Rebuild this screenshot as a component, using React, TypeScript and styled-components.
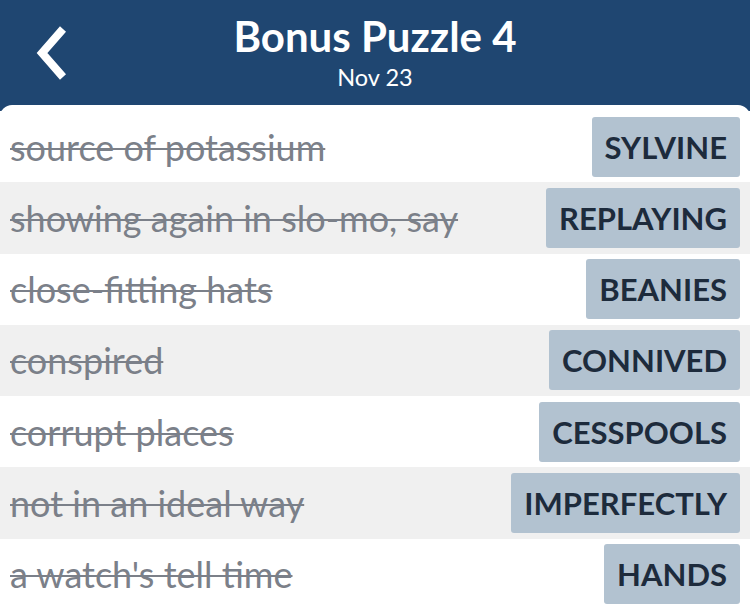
import styled, { createGlobalStyle } from 'styled-components';

const clues = [
  { clue: 'source of potassium', answer: 'SYLVINE' },
  { clue: 'showing again in slo-mo, say', answer: 'REPLAYING' },
  { clue: 'close-fitting hats', answer: 'BEANIES' },
  { clue: 'conspired', answer: 'CONNIVED' },
  { clue: 'corrupt places', answer: 'CESSPOOLS' },
  { clue: 'not in an ideal way', answer: 'IMPERFECTLY' },
  { clue: "a watch's tell time", answer: 'HANDS' },
];

const GlobalStyle = createGlobalStyle`
  body {
    margin: 0;
    background: #1f4671;
    font-family: Lato, 'Noto Sans', sans-serif;
    overflow: hidden;
  }
`;

const App = () => {
  return (
    <Page>
      <GlobalStyle />
      <Header>
        <BackButton aria-label="Back">
          <svg width="40" height="56" viewBox="0 0 40 56">
            <path d="M28 4 L7 28 L28 52" fill="none" stroke="#fff" strokeWidth="8" strokeLinejoin="miter" />
          </svg>
        </BackButton>
        <Title>Bonus Puzzle 4</Title>
        <Subtitle>Nov 23</Subtitle>
      </Header>

      <Card>
        {clues.map((c, i) => (
          <Row key={c.answer} $shaded={i % 2 === 1}>
            <Clue>{c.clue}</Clue>
            <Answer>{c.answer}</Answer>
          </Row>
        ))}
      </Card>
    </Page>
  );
};

export default App;

const Page = styled.div`
  width: 750px;
  height: 610px;
  display: flex;
  flex-direction: column;
  background: #1f4671;
`;

const Header = styled.div`
  position: relative;
  height: 105px;
  display: flex;
  flex-direction: column;
  align-items: center;
  color: #fff;
`;

const BackButton = styled.div`
  position: absolute;
  left: 35px;
  top: 25px;
  width: 40px;
  height: 56px;
`;

const Title = styled.div`
  margin-top: 12px;
  font-size: 42px;
  font-weight: 700;
  line-height: 48px;
`;

const Subtitle = styled.div`
  margin-top: 2px;
  font-size: 23.5px;
  font-weight: 400;
  line-height: 30px;
`;

const Card = styled.div`
  flex: 1;
  background: #fff;
  border-radius: 12px 12px 0 0;
  padding-top: 6px;
  display: flex;
  flex-direction: column;
`;

const Row = styled.div<{ $shaded: boolean }>`
  height: 71.3px;
  display: flex;
  align-items: center;
  justify-content: space-between;
  padding: 0 10px;
  background: ${(p) => (p.$shaded ? '#f0f0f0' : '#fff')};
`;

const Clue = styled.div`
  font-size: 36px;
  color: #7b8089;
  text-decoration: line-through;
  text-decoration-thickness: 2px;
`;

const Answer = styled.div`
  height: 60px;
  display: flex;
  align-items: center;
  padding: 0 13px;
  background: #b2c2d0;
  border-radius: 3px;
  color: #1d2b3c;
  font-size: 31px;
  font-weight: 700;
`;
